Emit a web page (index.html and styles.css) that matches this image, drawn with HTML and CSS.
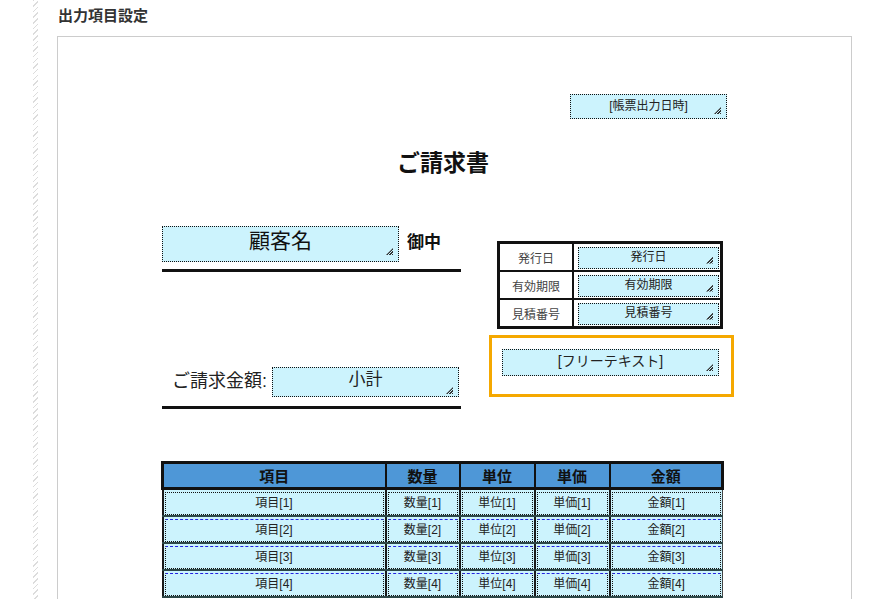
FILE: index.html
```html
<!DOCTYPE html>
<html lang="ja">
<head>
    <meta charset="UTF-8">
    <title>出力項目設定</title>
    <link rel="stylesheet" href="styles.css">
</head>
<body>
<div class="page">
    <div class="stripe"></div>

    <div class="main">
        <h2 class="section-title">出力項目設定</h2>

        <div class="canvas">
            <div class="field sizable f-date">[帳票出力日時]</div>

            <div class="doc-title">ご請求書</div>

            <div class="field sizable f-customer">顧客名</div>
            <div class="onchu">御中</div>
            <div class="rule rule-customer"></div>

            <table class="info-table">
                <tr>
                    <td class="info-label">発行日</td>
                    <td class="info-value"><div class="field sizable">発行日</div></td>
                </tr>
                <tr>
                    <td class="info-label">有効期限</td>
                    <td class="info-value"><div class="field sizable">有効期限</div></td>
                </tr>
                <tr>
                    <td class="info-label">見積番号</td>
                    <td class="info-value"><div class="field sizable">見積番号</div></td>
                </tr>
            </table>

            <!-- 選択中の要素 -->
            <div class="free-box">
                <div class="field sizable f-free">[フリーテキスト]</div>
            </div>

            <div class="amount-label">ご請求金額:</div>
            <div class="field sizable f-subtotal">小計</div>
            <div class="rule rule-amount"></div>

            <table class="items-table">
                <colgroup>
                    <col style="width: 223px">
                    <col style="width: 74px">
                    <col style="width: 75px">
                    <col style="width: 75px">
                    <col style="width: 113px">
                </colgroup>
                <thead>
                <tr>
                    <th>項目</th>
                    <th>数量</th>
                    <th>単位</th>
                    <th>単価</th>
                    <th>金額</th>
                </tr>
                </thead>
                <tbody>
                <tr>
                    <td><div class="cell">項目[1]</div></td>
                    <td><div class="cell">数量[1]</div></td>
                    <td><div class="cell">単位[1]</div></td>
                    <td><div class="cell">単価[1]</div></td>
                    <td><div class="cell">金額[1]</div></td>
                </tr>
                <tr>
                    <td><div class="cell">項目[2]</div></td>
                    <td><div class="cell">数量[2]</div></td>
                    <td><div class="cell">単位[2]</div></td>
                    <td><div class="cell">単価[2]</div></td>
                    <td><div class="cell">金額[2]</div></td>
                </tr>
                <tr>
                    <td><div class="cell">項目[3]</div></td>
                    <td><div class="cell">数量[3]</div></td>
                    <td><div class="cell">単位[3]</div></td>
                    <td><div class="cell">単価[3]</div></td>
                    <td><div class="cell">金額[3]</div></td>
                </tr>
                <tr>
                    <td><div class="cell">項目[4]</div></td>
                    <td><div class="cell">数量[4]</div></td>
                    <td><div class="cell">単位[4]</div></td>
                    <td><div class="cell">単価[4]</div></td>
                    <td><div class="cell">金額[4]</div></td>
                </tr>
                </tbody>
            </table>
        </div>
    </div>
</div>
</body>
</html>
```

FILE: styles.css
```css
body {
    margin: 0;
    background-color: #fff;
    font-family: 'Liberation Sans', 'Noto Sans CJK JP', sans-serif;
    color: #222;
    overflow: hidden;
}

.page {
    display: flex;
    align-items: stretch;
    min-height: 100vh;
}

.stripe {
    width: 5px;
    margin-left: 33px;
    background-image: repeating-linear-gradient(135deg, #dcdcdc 0, #dcdcdc 1px, #fff 1px, #fff 4px);
}

.main {
    margin-left: 19px;
    padding-top: 6px;
}

.section-title {
    margin: 0 0 10px 1px;
    font-size: 15px;
    line-height: 20px;
    font-weight: bold;
    color: #333;
}

/* 帳票のレイアウトキャンバス */
.canvas {
    position: relative;
    width: 793px;
    height: 580px;
    border: 1px solid #ccc;
    background-color: #fff;
}

.field {
    position: relative;
    box-sizing: border-box;
    background-color: #ccf3fd;
    border: 1px dotted #111;
    text-align: center;
    color: #222;
    font-size: 12px;
}

/* リサイズハンドル */
.sizable::after {
    content: '';
    position: absolute;
    right: 5px;
    bottom: 4px;
    width: 7px;
    height: 7px;
    background-image: repeating-linear-gradient(-45deg, #333 0, #333 1px, transparent 1px, transparent 2px);
    clip-path: polygon(100% 0, 100% 100%, 0 100%);
}

.f-date {
    position: absolute;
    left: 512px;
    top: 57px;
    width: 157px;
    height: 25px;
    line-height: 22px;
}

.doc-title {
    position: absolute;
    left: 339px;
    top: 111px;
    font-size: 23px;
    line-height: 30px;
    font-weight: bold;
    color: #111;
}

.f-customer {
    position: absolute;
    left: 104px;
    top: 189px;
    width: 237px;
    height: 36px;
    font-size: 21px;
    line-height: 28px;
    color: #111;
}

.f-customer::after {
    bottom: 6px;
}

.onchu {
    position: absolute;
    left: 349px;
    top: 194px;
    font-size: 17px;
    line-height: 24px;
    font-weight: bold;
    color: #111;
}

.rule {
    position: absolute;
    left: 104px;
    width: 299px;
    height: 3px;
    background-color: #111;
}

.rule-customer {
    top: 232px;
}

.rule-amount {
    top: 369px;
}

.info-table {
    position: absolute;
    left: 439px;
    top: 204px;
    width: 226px;
    border-collapse: collapse;
    border: 3px solid #111;
}

.info-table td {
    border: 2px solid #111;
    height: 23px;
    padding: 0;
}

.info-label {
    width: 72px;
    text-align: center;
    font-size: 12px;
    color: #444;
}

.info-value {
    padding: 2px 1px 1px 4px !important;
}

.info-value .field {
    height: 22px;
    line-height: 19px;
}

.free-box {
    position: absolute;
    left: 431px;
    top: 298px;
    width: 245px;
    height: 62px;
    box-sizing: border-box;
    border: 3px solid #f5a800;
    padding: 11px 0 0 10px;
}

.f-free {
    width: 217px;
    height: 27px;
    font-size: 14px;
    line-height: 22px;
}

.amount-label {
    position: absolute;
    left: 114px;
    top: 332px;
    font-size: 18px;
    line-height: 24px;
    color: #222;
}

.f-subtotal {
    position: absolute;
    left: 214px;
    top: 330px;
    width: 187px;
    height: 30px;
    font-size: 17px;
    line-height: 24px;
}

.f-subtotal::after {
    bottom: 2px;
}

/* 明細テーブル */
.items-table {
    position: absolute;
    left: 103px;
    top: 424px;
    width: 560px;
    table-layout: fixed;
    border-collapse: collapse;
}

.items-table th {
    height: 23px;
    padding: 0;
    background-color: #4e97d7;
    border: 2px solid #111;
    border-top: 3px solid #111;
    border-bottom: 3px solid #111;
    font-size: 15px;
    font-weight: bold;
    color: #111;
}

.items-table th:first-child {
    border-left: 3px solid #111;
}

.items-table th:last-child {
    border-right: 3px solid #111;
}

.items-table td {
    padding: 2px 1px 0 1px;
    background-color: #ccf3fd;
    border-left: 2px solid #1a1a1a;
    border-bottom: 2px solid #2d4747;
}

.items-table td:last-child {
    border-right: 1px solid #444;
}

.cell {
    box-sizing: border-box;
    height: 23px;
    line-height: 20px;
    border: 1px dotted #111;
    text-align: center;
    font-size: 12px;
    color: #222;
}

.items-table tbody tr + tr .cell {
    border-top: 1px dashed #2323e0;
}
```
